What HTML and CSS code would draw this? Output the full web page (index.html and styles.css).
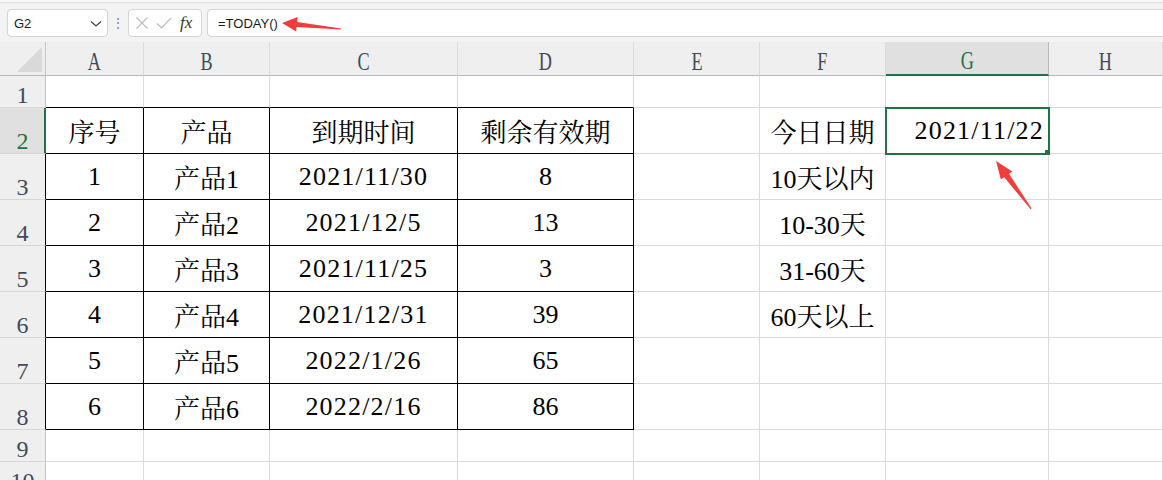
FILE: index.html
```html
<!DOCTYPE html>
<html lang="zh-CN">
<head>
  <meta charset="UTF-8">
  <title>剩余有效期 - TODAY</title>
  <link rel="stylesheet" href="styles.css">
</head>
<body>
  <div class="toolbar">
    <div class="namebox">
      <span>G2</span>
      <svg class="chevron" width="12" height="8" viewBox="0 0 12 8"><path d="M1 1.5 L6 6 L11 1.5" fill="none" stroke="#444" stroke-width="1.3"/></svg>
    </div>
    <div class="grip">⋮</div>
    <div class="fxbox">
      <svg width="14" height="14" viewBox="0 0 14 14"><path d="M1.5 1.5 L12.5 12.5 M12.5 1.5 L1.5 12.5" stroke="#bdbdbd" stroke-width="1.2" fill="none"/></svg>
      <svg width="16" height="14" viewBox="0 0 16 14"><path d="M1 7.5 L5.5 12 L15 2" stroke="#bdbdbd" stroke-width="1.2" fill="none"/></svg>
      <span class="fx">fx</span>
    </div>
    <div class="formula">=TODAY()</div>
  </div>

  <div class="sheet">
    <!-- column headers -->
    <div class="corner">
      <svg width="26" height="26" viewBox="0 0 26 26"><path d="M0 25 L25 0 L25 25 Z" fill="#d9d9d9"/></svg>
    </div>
    <div class="ch"><span>A</span></div>
    <div class="ch"><span>B</span></div>
    <div class="ch"><span>C</span></div>
    <div class="ch"><span>D</span></div>
    <div class="ch"><span>E</span></div>
    <div class="ch"><span>F</span></div>
    <div class="ch sel"><span>G</span></div>
    <div class="ch"><span>H</span></div>

    <!-- row 1 -->
    <div class="rh">1</div>
    <div class="c tb"></div><div class="c tb"></div><div class="c tb"></div><div class="c tb"></div>
    <div class="c"></div><div class="c"></div><div class="c"></div><div class="c"></div>

    <!-- row 2 -->
    <div class="rh sel">2</div>
    <div class="c t">序号</div><div class="c t">产品</div><div class="c t">到期时间</div><div class="c t">剩余有效期</div>
    <div class="c"></div><div class="c">今日日期</div><div class="c date active">2021/11/22</div><div class="c"></div>

    <!-- row 3 -->
    <div class="rh edge">3</div>
    <div class="c t">1</div><div class="c t">产品1</div><div class="c t date">2021/11/30</div><div class="c t">8</div>
    <div class="c"></div><div class="c">10天以内</div><div class="c"></div><div class="c"></div>

    <!-- row 4 -->
    <div class="rh edge">4</div>
    <div class="c t">2</div><div class="c t">产品2</div><div class="c t date">2021/12/5</div><div class="c t">13</div>
    <div class="c"></div><div class="c">10-30天</div><div class="c"></div><div class="c"></div>

    <!-- row 5 -->
    <div class="rh edge">5</div>
    <div class="c t">3</div><div class="c t">产品3</div><div class="c t date">2021/11/25</div><div class="c t">3</div>
    <div class="c"></div><div class="c">31-60天</div><div class="c"></div><div class="c"></div>

    <!-- row 6 -->
    <div class="rh edge">6</div>
    <div class="c t">4</div><div class="c t">产品4</div><div class="c t date">2021/12/31</div><div class="c t">39</div>
    <div class="c"></div><div class="c">60天以上</div><div class="c"></div><div class="c"></div>

    <!-- row 7 -->
    <div class="rh edge">7</div>
    <div class="c t">5</div><div class="c t">产品5</div><div class="c t date">2022/1/26</div><div class="c t">65</div>
    <div class="c"></div><div class="c"></div><div class="c"></div><div class="c"></div>

    <!-- row 8 -->
    <div class="rh edge">8</div>
    <div class="c t">6</div><div class="c t">产品6</div><div class="c t date">2022/2/16</div><div class="c t">86</div>
    <div class="c"></div><div class="c"></div><div class="c"></div><div class="c"></div>

    <!-- row 9 -->
    <div class="rh">9</div>
    <div class="c"></div><div class="c"></div><div class="c"></div><div class="c"></div>
    <div class="c"></div><div class="c"></div><div class="c"></div><div class="c"></div>

    <!-- row 10 -->
    <div class="rh">10</div>
    <div class="c"></div><div class="c"></div><div class="c"></div><div class="c"></div>
    <div class="c"></div><div class="c"></div><div class="c"></div><div class="c"></div>
  </div>

  <!-- red annotation arrows -->
  <svg class="marks" width="1163" height="480" viewBox="0 0 1163 480">
    <polygon points="282,23 297.6,17 297.2,22 341,28.6 340.8,29.6 296.6,27 296.2,31.5" fill="#f23d3d"/>
    <polygon points="996,161 1012.3,171.4 1009,173.7 1031.6,208.6 1030.6,209.3 1004.2,177.3 1000.9,179.6" fill="#f23d3d"/>
  </svg>
</body>
</html>
```

FILE: styles.css
```css
body {
  margin: 0;
  background: #f7f7f7;
  font-family: "Liberation Sans", "Noto Sans CJK SC", sans-serif;
  overflow: hidden;
  position: relative;
  width: 1163px;
  height: 480px;
}

/* formula bar */
.toolbar {
  margin-top: 2px;
  border-top: 1px solid #e2e2e2;
  height: 40px;
  box-sizing: border-box;
  padding-top: 6px;
  background: #f3f3f3;
  display: flex;
  align-items: flex-start;
}

.namebox,
.fxbox,
.formula {
  height: 28px;
  box-sizing: border-box;
  background: #ffffff;
  border: 1px solid #d4d4d4;
  border-radius: 4px;
  display: flex;
  align-items: center;
  font-size: 13px;
  color: #1a1a1a;
}

.namebox {
  margin-left: 7px;
  width: 101px;
  padding: 0 5px 0 6px;
  justify-content: space-between;
}

.chevron {
  margin-top: 1px;
}

.grip {
  width: 20px;
  text-align: center;
  color: #8a8a8a;
  font-size: 14px;
  line-height: 28px;
}

.fxbox {
  width: 74px;
  padding: 0 4px 0 6px;
  gap: 7px;
}

.fx {
  font-family: "Liberation Serif", serif;
  font-style: italic;
  font-size: 17px;
  color: #333;
  margin-left: 1px;
}

.formula {
  margin-left: 5px;
  flex: 1;
  margin-right: -6px;
  padding-left: 10px;
}

/* sheet grid */
.sheet {
  display: grid;
  grid-template-columns: 46px 98px 126px 188px 176px 126px 126px 163px 1fr;
  grid-template-rows: 34px 32px repeat(7, 46px) 32px 32px;
  background: #ffffff;
}

.corner,
.ch,
.rh {
  background: #efefef;
  color: #3f4b59;
  font-family: "Liberation Serif", serif;
  box-sizing: border-box;
}

.corner {
  border-right: 1px solid #c4c4c4;
  border-bottom: 1px solid #b8b8b8;
  display: flex;
  justify-content: flex-end;
  align-items: flex-end;
  padding: 0 2px 2px 0;
}

.ch {
  border-right: 1px solid #dcdcdc;
  border-bottom: 1px solid #b8b8b8;
  display: flex;
  justify-content: center;
  align-items: flex-end;
  font-size: 26px;
  line-height: 26px;
}

.ch span {
  display: inline-block;
  transform: scaleX(0.7);
}

.ch.sel {
  background: #e0e0e0;
  color: #217346;
  border-right-color: #b8b8b8;
  border-bottom: 2px solid #217346;
}

.rh {
  border-right: 1px solid #c4c4c4;
  border-bottom: 1px solid #d6d6d6;
  display: flex;
  justify-content: center;
  align-items: flex-end;
  font-size: 24px;
  line-height: 24px;
}

.rh.edge {
  border-right-color: #000000;
}

.rh.sel {
  background: #e0e0e0;
  color: #217346;
  border-right: 2px solid #217346;
  padding-left: 1px;
}

.c {
  border-right: 1px solid #dadada;
  border-bottom: 1px solid #dadada;
  box-sizing: border-box;
  display: flex;
  align-items: center;
  justify-content: center;
  font-family: "Liberation Serif", "Noto Serif CJK SC", "Noto Sans CJK SC", serif;
  font-size: 26px;
  color: #000000;
  white-space: nowrap;
}

.c.t {
  border-right-color: #000000;
  border-bottom-color: #000000;
}

.c.tb {
  border-bottom-color: #000000;
}

.c.date {
  letter-spacing: 1.2px;
}

.c.active {
  position: relative;
  justify-content: flex-end;
  padding-right: 4px;
  letter-spacing: 1.2px;
  outline: 2px solid #217346;
  outline-offset: -1px;
}

.c.active::after {
  content: "";
  position: absolute;
  right: -2px;
  bottom: -2px;
  width: 5px;
  height: 5px;
  background: #217346;
}

.marks {
  position: absolute;
  left: 0;
  top: 0;
  pointer-events: none;
}
```
